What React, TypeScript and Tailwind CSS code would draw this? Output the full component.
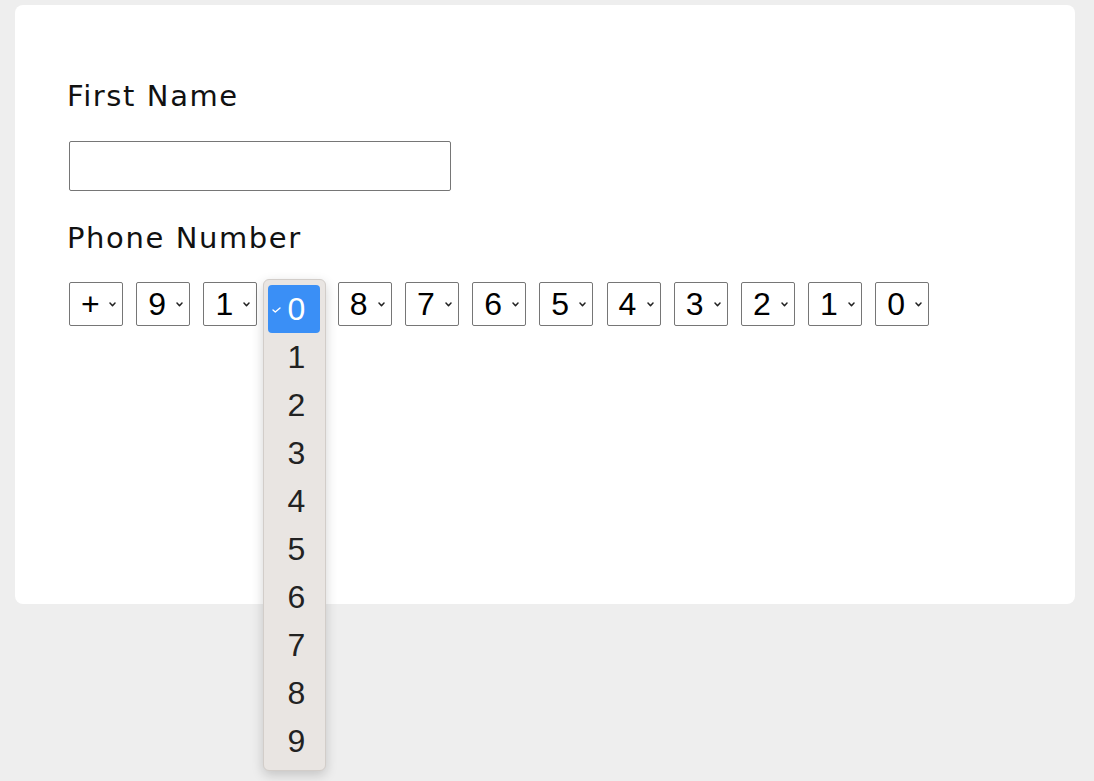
import React from 'react';

const digits = ['+', '9', '1', '0', '8', '7', '6', '5', '4', '3', '2', '1', '0'];
const options = ['0', '1', '2', '3', '4', '5', '6', '7', '8', '9'];

const Chevron: React.FC<{ className?: string }> = ({ className }) => (
  <svg width="7" height="5" viewBox="0 0 7 5" className={className}>
    <polyline points="1,1 3.5,3.7 6,1" fill="none" stroke="currentColor" strokeWidth="1.5" strokeLinecap="round" strokeLinejoin="round" />
  </svg>
);

const DigitSelect: React.FC<{ value: string; open?: boolean }> = ({ value, open }) => (
  <div className="relative">
    <div className="w-[54px] h-[44px] border border-[#767676] rounded-[2px] bg-white flex items-center justify-between pl-[11px] pr-[6px]">
      <span className="text-[32px] leading-none text-black" style={{ fontFamily: '"Liberation Sans", Arial, sans-serif' }}>
        {value}
      </span>
      <Chevron className="text-[#222]" />
    </div>
    {open && (
      <div className="absolute left-[-8px] top-[-3px] z-10 w-[63px] rounded-[6px] bg-[#e9e5e2] border border-[#d2cdc9] shadow-[0_4px_12px_rgba(0,0,0,0.18)] pt-[5px] pb-[5px] pl-[4px] pr-[5px]">
        {options.map((o, i) => (
          <div
            key={o}
            className={
              i === 0
                ? 'relative h-[48px] rounded-[4px] bg-[#3a8ff6] text-white flex items-center pl-[20px]'
                : 'relative h-[48px] text-[#222] flex items-center pl-[20px]'
            }
          >
            {i === 0 && (
              <svg width="9" height="6" viewBox="0 0 9 6" className="absolute left-[4px] top-[22px]">
                <polyline points="1,3 3.3,5 8,1" fill="none" stroke="white" strokeWidth="1.4" strokeLinecap="round" strokeLinejoin="round" />
              </svg>
            )}
            <span className="text-[32px] leading-none" style={{ fontFamily: '"Liberation Sans", Arial, sans-serif' }}>
              {o}
            </span>
          </div>
        ))}
      </div>
    )}
  </div>
);

export default function App() {
  return (
    <div className="min-h-[781px] w-full bg-[#eeeeee] pt-[5px] pl-[15px] pr-[19px]">
      <div className="w-[1060px] h-[599px] bg-white rounded-[8px] pt-[74px] pl-[54px]" style={{ fontFamily: '"DejaVu Sans", "Noto Sans", sans-serif' }}>
        <label className="block -ml-[2px] text-[29px] leading-[34px] tracking-[1.6px] text-[#111]">First Name</label>
        <input type="text" className="mt-[28px] block w-[382px] h-[50px] border border-[#767676] rounded-[2px] outline-none" />
        <label className="block mt-[30px] -ml-[2px] text-[29px] leading-[34px] tracking-[1.6px] text-[#111]">Phone Number</label>
        <div className="mt-[27px] flex gap-[13.2px]">
          {digits.map((d, i) => (
            <DigitSelect key={i} value={d} open={i === 3} />
          ))}
        </div>
      </div>
    </div>
  );
}
